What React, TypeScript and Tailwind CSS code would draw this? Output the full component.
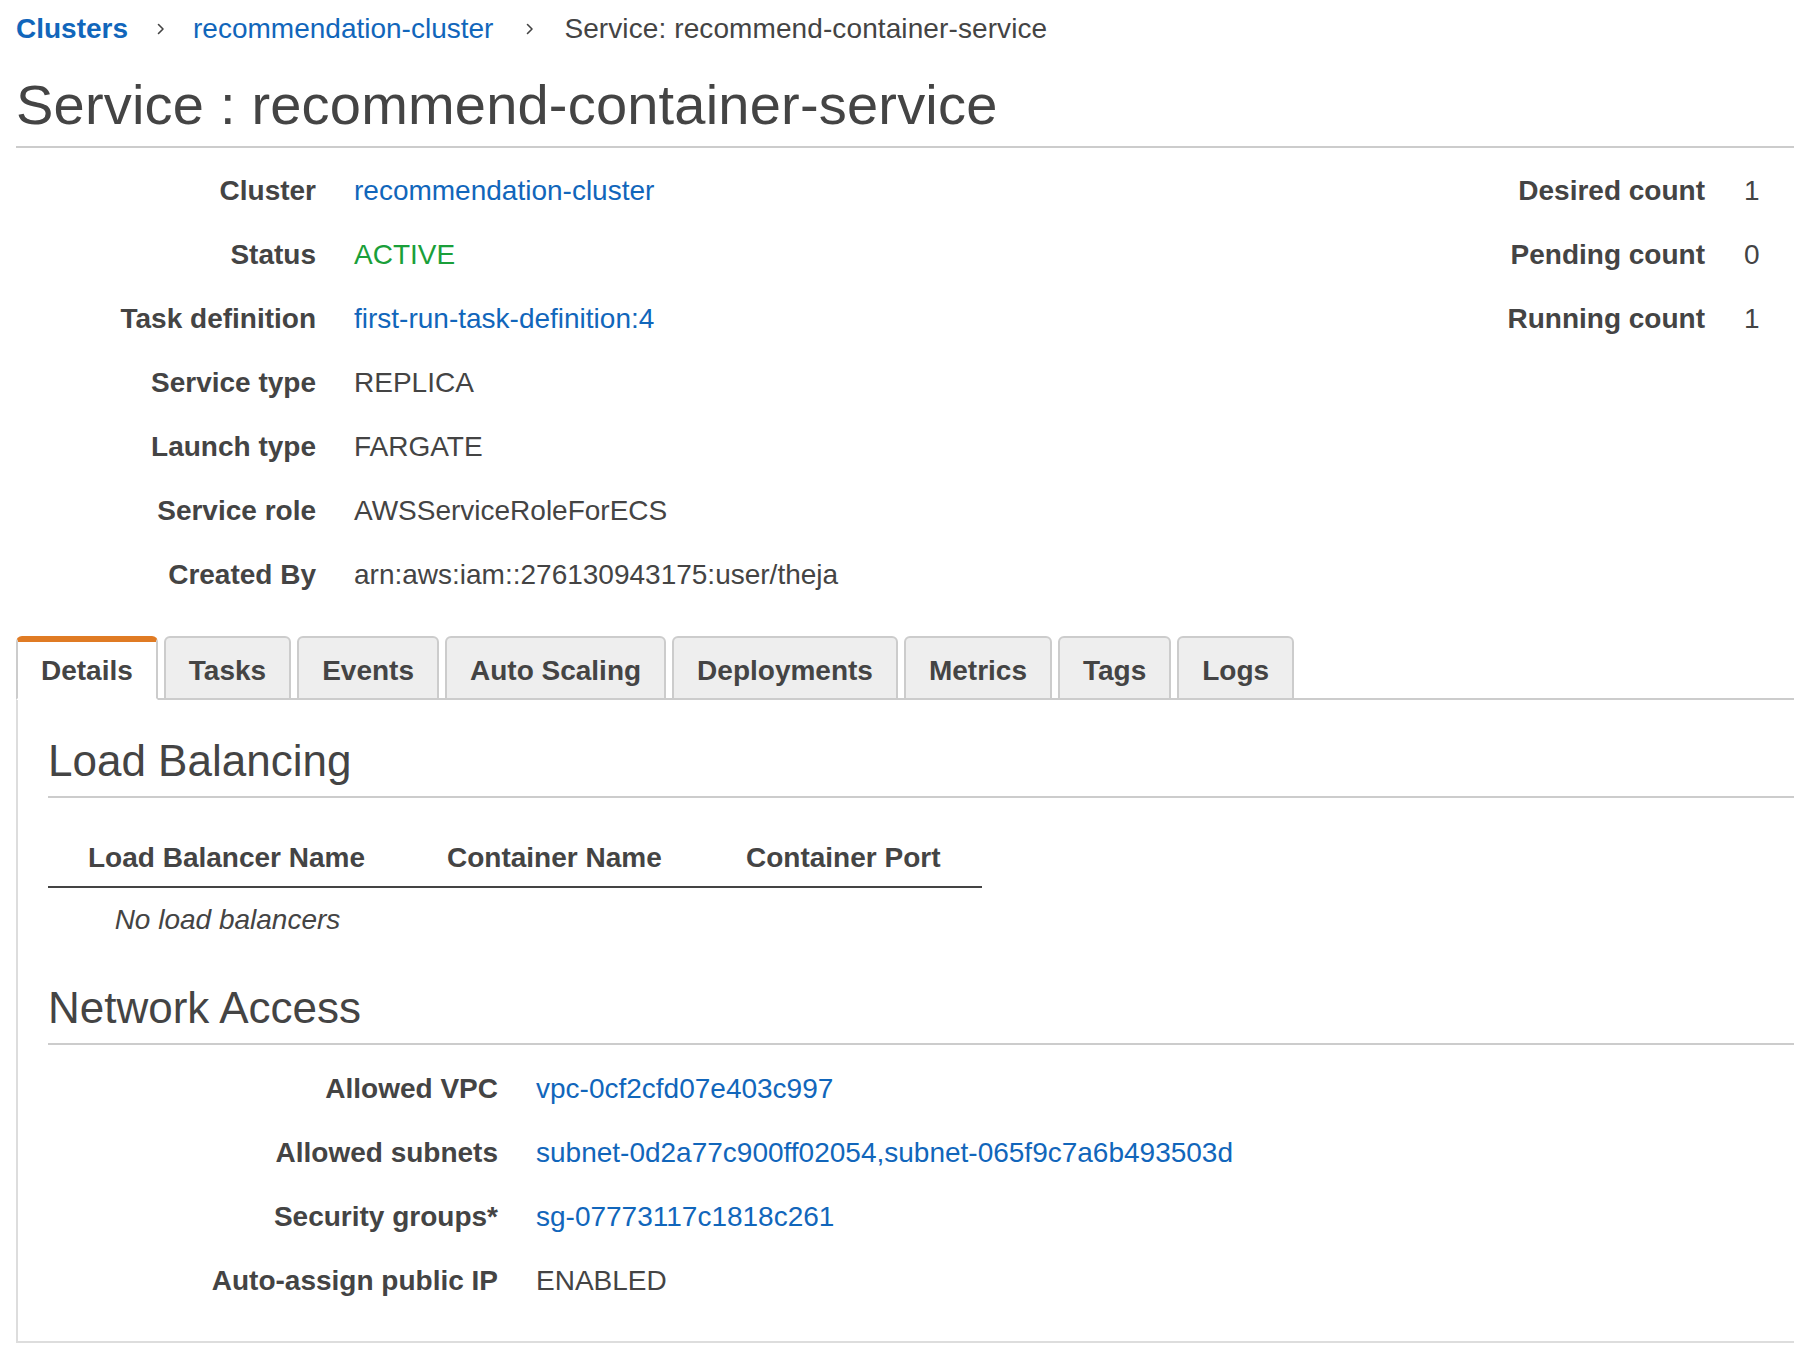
import React from 'react'

const LINK = 'text-[#1166bb]'

const summary: { label: string; value: string; kind?: 'link' | 'ok' }[] = [
  { label: 'Cluster', value: 'recommendation-cluster', kind: 'link' },
  { label: 'Status', value: 'ACTIVE', kind: 'ok' },
  { label: 'Task definition', value: 'first-run-task-definition:4', kind: 'link' },
  { label: 'Service type', value: 'REPLICA' },
  { label: 'Launch type', value: 'FARGATE' },
  { label: 'Service role', value: 'AWSServiceRoleForECS' },
  { label: 'Created By', value: 'arn:aws:iam::276130943175:user/theja' },
]

const counts = [
  { label: 'Desired count', value: '1' },
  { label: 'Pending count', value: '0' },
  { label: 'Running count', value: '1' },
]

const tabs = ['Details', 'Tasks', 'Events', 'Auto Scaling', 'Deployments', 'Metrics', 'Tags', 'Logs']

function Chevron({ className }: { className: string }) {
  return (
    <svg width="12" height="16" viewBox="0 0 12 16" className={className} fill="none">
      <path d="M3.5 3.5L8 8l-4.5 4.5" stroke="#444" strokeWidth="1.6" strokeLinecap="round" strokeLinejoin="round" />
    </svg>
  )
}

function valueClass(kind?: 'link' | 'ok') {
  if (kind === 'link') return LINK
  if (kind === 'ok') return 'text-[#1a9f3a]'
  return ''
}

export default function App() {
  return (
    <div className="min-h-screen bg-white pl-[16px] font-['Liberation_Sans',Arial,sans-serif] text-[28px] text-[#444]">
      {/* breadcrumb */}
      <nav className="flex items-center pt-[9px] leading-[40px]">
        <span className={`font-bold ${LINK}`}>Clusters</span>
        <Chevron className="ml-[27px] mr-[26px]" />
        <span className={LINK}>recommendation-cluster</span>
        <Chevron className="ml-[31px] mr-[28px]" />
        <span className="tracking-[0.1px]">Service: recommend-container-service</span>
      </nav>

      <h1 className="mt-[24px] border-b-2 border-[#ccc] pb-[9px] text-[56px] leading-[64px] tracking-[0.2px]">
        Service : recommend-container-service
      </h1>

      {/* summary */}
      <div className="mt-[11px] flex justify-between">
        <div className="grid grid-cols-[300px_auto] gap-x-[38px]">
          {summary.map(r => (
            <React.Fragment key={r.label}>
              <div className="text-right font-bold leading-[64px]">{r.label}</div>
              <div className={`leading-[64px] ${valueClass(r.kind)}`}>{r.value}</div>
            </React.Fragment>
          ))}
        </div>
        <div className="grid grid-cols-[auto_50px] content-start gap-x-[39px]">
          {counts.map(c => (
            <React.Fragment key={c.label}>
              <div className="text-right font-bold leading-[64px]">{c.label}</div>
              <div className="leading-[64px]">{c.value}</div>
            </React.Fragment>
          ))}
        </div>
      </div>

      {/* tabs */}
      <div className="mt-[29px] flex border-b-2 border-[#ccc]">
        {tabs.map((t, i) =>
          i === 0 ? (
            <div
              key={t}
              className="-mb-[2px] mr-[6px] flex h-[64px] items-center rounded-t-[6px] border-x-2 border-t-[6px] border-b-2 border-x-[#ccc] border-t-[#e07b24] border-b-white bg-white px-[23px] pt-[2px] font-bold"
            >
              {t}
            </div>
          ) : (
            <div
              key={t}
              className="-mb-[2px] mr-[6px] flex h-[64px] items-center rounded-t-[6px] border-2 border-[#ccc] bg-[#eee] px-[23px] pt-[6px] font-bold"
            >
              {t}
            </div>
          )
        )}
      </div>

      {/* panel */}
      <div className="border-b-2 border-l-2 border-[#ddd] pb-[28px] pl-[30px]">
        <h2 className="border-b-2 border-[#ccc] pb-[9px] pt-[35px] text-[44px] leading-[52px]">Load Balancing</h2>

        <table className="mt-[40px] border-collapse">
          <thead>
            <tr>
              <th className="w-[359px] border-b-2 border-[#444] px-[40px] pb-[8px] text-left font-bold leading-[40px]">Load Balancer Name</th>
              <th className="w-[299px] border-b-2 border-[#444] px-[40px] pb-[8px] text-left font-bold leading-[40px]">Container Name</th>
              <th className="w-[276px] border-b-2 border-[#444] px-[40px] pb-[8px] text-left font-bold leading-[40px]">Container Port</th>
            </tr>
          </thead>
          <tbody>
            <tr>
              <td className="pt-[12px] text-center italic leading-[40px]">No load balancers</td>
              <td />
              <td />
            </tr>
          </tbody>
        </table>

        <h2 className="mt-[42px] border-b-2 border-[#ccc] pb-[9px] text-[44px] leading-[52px]">Network Access</h2>

        <div className="mt-[12px] grid grid-cols-[450px_auto] gap-x-[38px]">
          <div className="text-right font-bold leading-[64px]">Allowed VPC</div>
          <div className={`leading-[64px] ${LINK}`}>vpc-0cf2cfd07e403c997</div>
          <div className="text-right font-bold leading-[64px]">Allowed subnets</div>
          <div className={`leading-[64px] ${LINK}`}>subnet-0d2a77c900ff02054,subnet-065f9c7a6b493503d</div>
          <div className="text-right font-bold leading-[64px]">Security groups*</div>
          <div className={`leading-[64px] ${LINK}`}>sg-07773117c1818c261</div>
          <div className="text-right font-bold leading-[64px]">Auto-assign public IP</div>
          <div className="leading-[64px]">ENABLED</div>
        </div>
      </div>
    </div>
  )
}
